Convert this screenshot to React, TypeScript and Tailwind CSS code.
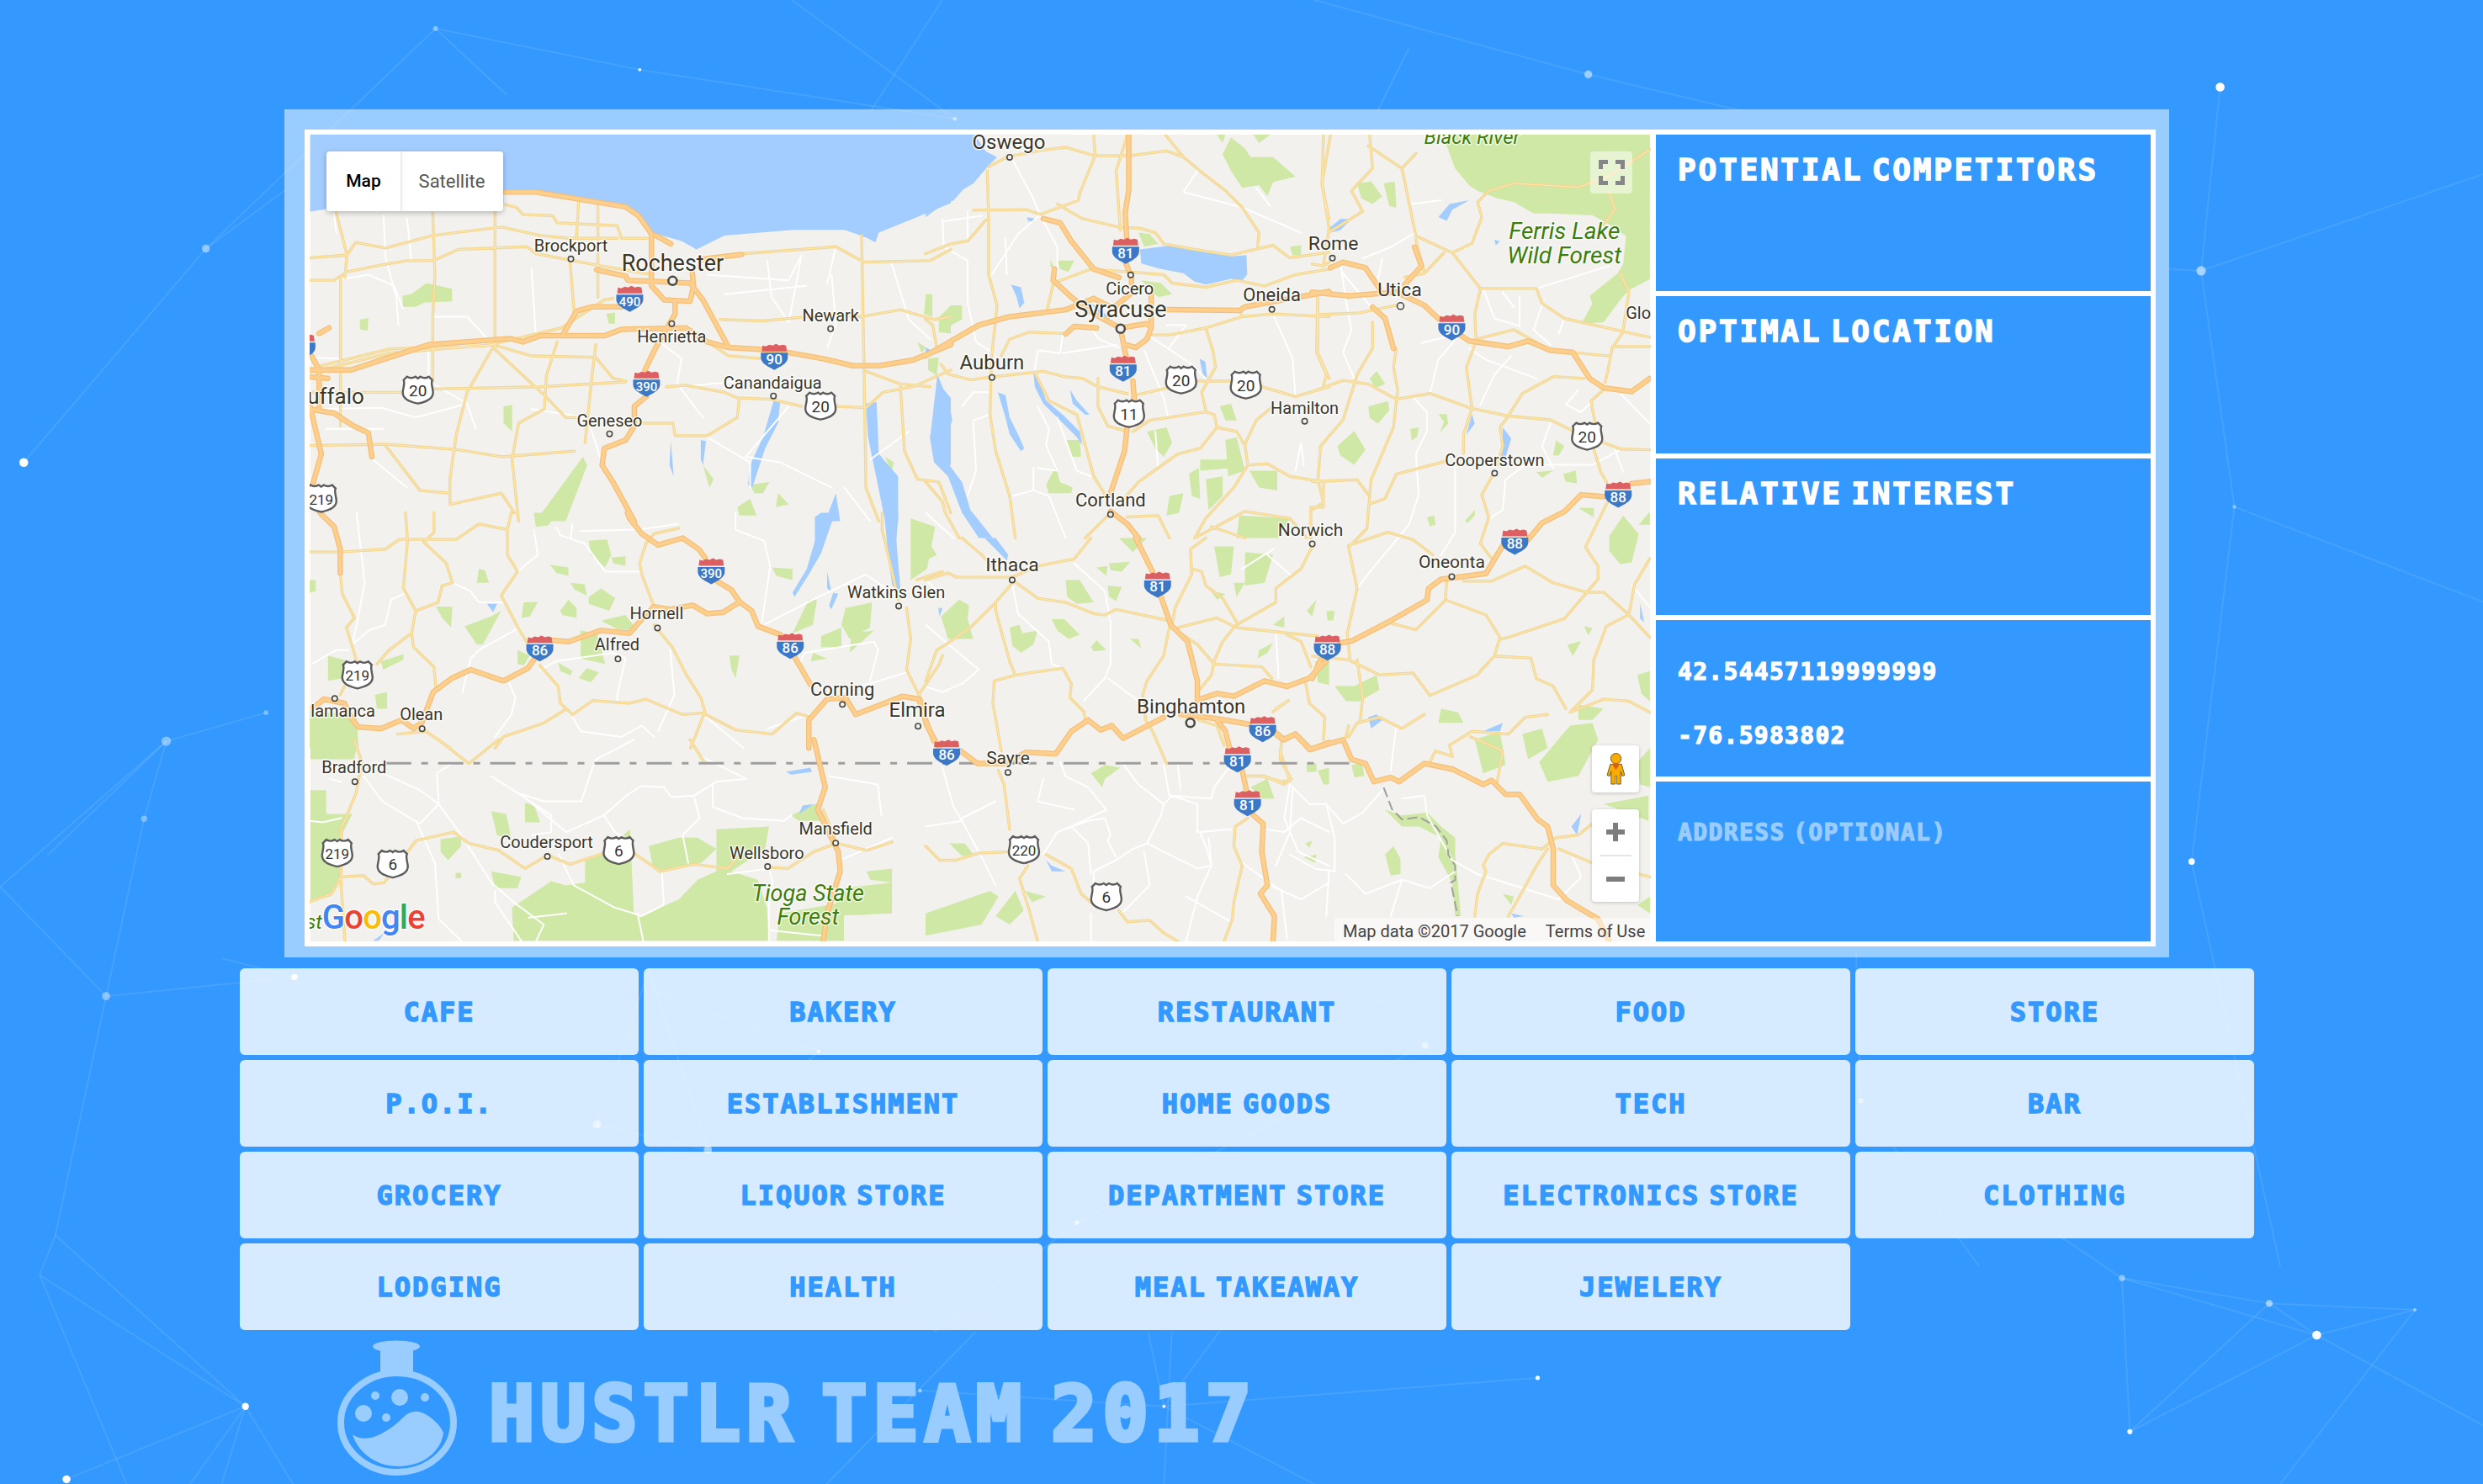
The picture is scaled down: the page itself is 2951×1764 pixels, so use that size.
import React from 'react';

const BLOCK = "font-['DejaVu_Sans_Mono',monospace] font-bold leading-none";

const CATEGORIES = [
  'CAFE', 'BAKERY', 'RESTAURANT', 'FOOD', 'STORE',
  'P.O.I.', 'ESTABLISHMENT', 'HOME GOODS', 'TECH', 'BAR',
  'GROCERY', 'LIQUOR STORE', 'DEPARTMENT STORE', 'ELECTRONICS STORE', 'CLOTHING',
  'LODGING', 'HEALTH', 'MEAL TAKEAWAY', 'JEWELERY',
];

// Map geometry is traced per region: x, y is the region's corner on the page, sx / sy its trace scale
interface Zone {
  x: number;
  y: number;
  sx: number;
  sy: number;
  parks: string;
  water: string;
  white: string;
  minor: string;
  major: string;
}

const ZONES: Zone[] = [
  {
    x: 330, y: 120, sx: 1.96, sy: 3,
    parks: 'M310 690L345 650L405 670L405 715L340 720L320 735L290 735L290 695ZM190 780L210 775L208 820L190 815ZM765 760L785 755L785 795L770 795ZM525 1090L545 1085L545 1180L525 1150ZM990 1300L1015 1350L1005 1380ZM1100 1370L1145 1360L1130 1400L1110 1400ZM1070 1450L1100 1420L1115 1480L1075 1480ZM1165 1400L1190 1440L1160 1450ZM600 1500L710 1270L720 1300L670 1500ZM1415 1270L1435 1290L1430 1330ZM1515 920L1540 915L1535 980L1515 960ZM1490 860L1510 880L1500 900ZM1510 700L1525 690L1525 770L1505 760ZM1540 770L1568 765L1568 830L1540 825Z',
    water: 'M74 120L1568 120L1568 365L1480 420L1400 470L1392 505L1375 490L1320 460L1200 460L1040 480L975 530L940 500L870 470L840 400L820 378L700 345L590 322L525 330L525 370L115 385L74 395ZM1155 1070L1170 1075L1165 1150L1135 1240L1105 1380L1095 1370L1100 1300L1130 1200ZM1370 1080L1395 1075L1400 1260L1445 1340L1445 1500L1415 1500L1395 1350L1375 1200ZM1535 1000L1568 1060L1568 1300L1535 1290L1520 1200ZM915 1215L922 1340L912 1300ZM985 1210L997 1215L990 1300L985 1280ZM1300 1400L1310 1500L1275 1500Z',
    white: 'M130 400L135 470M245 410L250 560L275 700L280 800M130 640L210 620L270 660L290 740M300 420L310 570M590 600L600 830M680 520L780 490M360 770L440 770L500 870M350 870L350 1000L440 1080L460 1170M145 920L80 915M80 1100L240 1095L320 1130L440 1080M110 1170L245 1170M940 1020L1075 1000M1000 620L1190 640L1220 550L1190 790M1040 690L1230 660M1140 570L1150 700L1190 790M1290 620L1300 800L1280 880M1300 520L1280 650M1430 580L1470 780L1520 850M880 850L940 920L930 1010L990 1130M1190 1090L1090 1270L1170 1290L1290 1380M1000 1200L1100 1290L1100 1380M1320 1380L1380 1500M1470 1180L1380 1280M220 1280L300 1380M590 1100L720 1130L750 1270',
    minor: 'M530 370L555 380L570 405L640 410L650 435L790 445L800 490L860 490M74 640L130 640L160 610L240 585L300 570L360 570L420 530L580 520L600 545L740 585L870 620M74 560L160 550L180 505L250 525L360 480L520 450L610 480L680 490L790 490M145 630L145 1160M135 400L160 550L155 630M360 400L365 620L360 770L360 1000M505 380L505 880M680 575L690 760M700 360L695 490M745 370L745 600M745 620L745 700M74 1040L290 1040M360 1028L610 1020L810 1003M905 1020L950 1015L1040 1040L1070 1060L1150 1065L1220 1090M1300 1090L1370 1095L1410 1040L1480 1020L1568 960M100 960L260 900L500 870L590 910L740 915L780 990L810 1000M100 945L260 885L350 880L480 875L660 810L760 710L780 705M500 880L620 1050L670 1130L700 1130M500 880L440 1040L415 1190L400 1350L400 1440L520 1400L550 1470M650 860L625 980L620 1100L560 1150L545 1280L560 1500M740 870L730 1000L715 1220M850 1150L920 1150L925 1195L1000 1195L1070 1130L1075 1060M74 1230L250 1225L420 1245L520 1270L690 1250M250 1230L330 1390L400 1400M1000 860L1050 910L1130 920M1030 780L1130 785L1300 760L1360 770L1450 745L1530 780L1568 770M1040 550L1300 520L1365 575L1520 570L1568 530M1360 480L1365 900L1370 1380L1400 1500M1370 965L1450 1010L1460 1250L1490 1350L1540 1360L1568 1470M1450 1010L1520 1020',
    major: 'M74 960L170 960L280 905L350 870L540 848L570 860L610 838L760 838L800 815L950 810L1000 860L1050 880L1160 890L1270 920L1340 945L1400 945L1480 925L1568 870M742 603L810 625L815 640L960 650L970 670L990 710L1050 880M870 480L870 660L900 710L960 715L968 660L965 610M880 480L915 510M530 325L600 325L660 340L700 350L810 378L840 410L870 475M985 565L1080 548M665 830L695 750L730 735L800 735M855 960L880 880L925 760L925 715M858 1055L830 1090L830 1160L810 1210L760 1240L755 1300L780 1360L830 1500M74 1100L130 1115L175 1160L210 1185L218 1270M74 1090L100 1260L80 1370M74 985L115 990M118 810L95 830M74 900L95 960L95 1100',
  },
  {
    x: 360, y: 610, sx: 2.063, sy: 3,
    parks: 'M700 100L745 95L755 150L740 195L705 150ZM755 160L790 155L790 190L760 180ZM605 185L650 195L650 225L620 215ZM430 200L445 205L455 250L425 250ZM655 250L690 255L695 295L665 275ZM700 300L730 270L765 305L750 350L700 325ZM630 350L650 310L670 340L670 375L635 365ZM540 320L575 318L555 370L535 375ZM395 405L460 370L485 350L440 470L425 470ZM325 335L365 335L362 410L340 375ZM730 385L790 365L820 420L770 415ZM680 420L720 430L740 540L680 520ZM525 490L555 510L540 545L525 540ZM625 535L660 565L655 580L630 565ZM675 590L695 555L725 570L705 605ZM190 530L245 505L245 525L195 560ZM60 510L110 530L100 590L60 600ZM175 650L205 640L205 700L180 700ZM15 710L130 720L135 840L15 840ZM1150 195L1200 200L1200 240L1160 225ZM1045 510L1070 510L1060 590L1050 560ZM1240 310L1260 310L1250 400L1200 430ZM1330 340L1395 320L1390 410L1340 450L1320 400ZM1270 440L1320 410L1320 480L1270 480ZM1345 430L1400 420L1340 500ZM1250 500L1285 520L1245 530ZM1490 20L1550 50L1530 200L1490 240ZM565 0L625 0L600 45L570 50ZM15 240L30 240L30 280L15 285Z',
    water: 'M1255 15L1270 0L1305 0L1290 60L1270 145L1240 220L1205 300L1200 285L1235 200L1245 150L1255 100ZM1425 0L1460 0L1455 100L1465 280L1445 260L1435 160ZM1285 210L1295 280L1285 270ZM1300 285L1312 290L1295 345L1290 330ZM450 325L475 325L465 355Z',
    white: 'M130 0L150 250L130 400L120 470M565 60L575 150L525 210M620 50L630 80L690 110L740 210L825 210M660 40L655 90M680 65L820 60L920 40M1060 0L1060 60L1130 100L1145 190L1125 390M365 250L410 280L430 320L495 320M245 290L215 310L200 400L160 420L120 470M530 410L430 490L410 520L390 640M20 540L80 490L110 490M580 560L620 530L760 500L790 520L770 650L770 670M505 610L520 660L510 720L470 800M900 490L910 650L870 780M1220 530L1230 500L1400 460L1410 490L1390 600M1130 400L1250 310L1380 220L1450 290M980 720L1080 840M660 730L680 780L780 800L830 760L860 800M1480 570L1320 640M1140 770L1240 720',
    minor: 'M15 140L90 140L200 130L235 95L375 95L430 40L500 60L510 0M250 0L255 100L245 270L275 350L265 430L210 490L180 540M295 105L350 180L365 250L340 260L330 320L275 350M320 0L320 70L295 105M500 60L500 150L525 210L485 295L530 420L560 490M90 215L95 290L125 375L105 410L120 480L130 530M265 430L270 480L320 550L325 630M100 620L90 650M580 545L625 620L630 680L660 720L710 670L800 680L840 665L880 690L930 720L980 715L1060 775L1150 790L1210 715L1245 730M640 705L590 750L490 800L470 840M860 335L830 220L825 180L840 110M840 110L860 75L920 55M860 400L905 480L940 580L975 660L985 710L950 840M1480 340L1490 450L1480 560L1510 650L1560 540L1568 510M1420 0L1420 60L1460 310M1510 650L1530 700M230 790L300 780L360 840M1505 240L1568 210',
    major: 'M40 0L75 50L90 130L90 215M120 740L135 765L190 770L240 740L270 770L290 750L318 640L365 590L410 560L490 600L550 555L580 495M610 455L650 460L730 420L800 430L830 380L860 335L900 345L955 330L990 360L1030 355L1070 318M1070 318L1050 275L1010 240M985 160L970 130L930 90L870 115L830 75L800 20L795 0M1070 318L1100 350L1115 405L1170 435M1205 515L1245 615M1240 840L1240 740L1285 665L1330 660L1355 720L1470 655L1510 665L1530 760L1560 840M20 700L50 665L100 680L120 740',
  },
  {
    x: 360, y: 880, sx: 2.24, sy: 3,
    parks: 'M18 0L145 0L135 70L18 70ZM18 180L60 180L60 265L130 265L105 330L100 500L70 560L18 575ZM500 255L540 265L555 360L515 340ZM590 225L615 235L630 295L590 295ZM365 355L420 345L420 380L385 430L365 400ZM405 475L420 475L420 495L405 495ZM500 470L580 490L570 530L510 530ZM555 600L660 505L700 520L750 510L750 430L800 400L870 320L880 620L905 630L950 600L1000 570L1050 500L1100 470L1100 320L1240 310L1230 390L1140 470L1210 500L1235 600L1240 718L560 718ZM920 380L1000 350L1050 350L1100 390L1060 440L960 470L930 450ZM1440 530L1568 510L1568 620L1400 630ZM1300 270L1370 225L1395 290L1320 290ZM1500 470L1568 460L1568 510L1510 500ZM1270 620L1440 580L1440 718L1260 718Z',
    water: 'M1285 115L1350 100L1355 115L1300 125ZM1330 235L1360 230L1320 265ZM185 718L215 690L200 718Z',
    white: 'M160 130L210 220L260 260L310 300L360 230L420 340L500 510L560 580L640 660L620 718M100 280L50 295L18 290M70 140L100 150M300 290L350 440L360 640L420 718M390 90L355 120L360 230L310 180L210 120M500 130L570 190L660 270L660 330L610 340M570 190L640 220L740 220L770 100L780 70L880 0M610 230L700 330L800 270L860 200L900 165L960 170L980 205L1040 200L1100 150L1180 140L1060 60M800 270L830 330L870 360M680 410L720 520L830 600L880 620L900 630L960 590L955 470M890 620L905 718M1040 200L1055 280L1010 340L1025 440M1090 160L1090 240L1170 280L1280 290L1300 270M1130 480L1240 460L1250 510L1240 580L1240 718M1400 130L1530 160L1540 270M600 635L700 620M510 540L510 580L580 718M1240 680L1380 700M1430 430L1568 350',
    minor: 'M135 0L155 80L140 190L100 320L100 520L110 718M18 578L75 550L100 490L160 485L185 515L215 510L300 360L400 330L440 370L520 395L590 460L650 412L710 445L800 405M880 405L950 470L1040 445L1130 460L1150 430M1240 455L1290 460L1360 400L1420 370L1500 395L1568 365M360 0L440 85L520 0M1030 0L1070 85M1420 370L1385 250',
    major: 'M1360 0L1390 170L1370 250L1425 400L1430 470L1395 620L1385 718',
  },
  {
    x: 1100, y: 160, sx: 3, sy: 3,
    parks: 'M1090 10L1140 50L1160 80L1240 80L1320 150L1240 170L1220 220L1190 180L1130 190L1090 130L1060 70ZM1040 0L1070 0L1060 30ZM1170 0L1230 0L1190 30ZM760 350L800 355L830 390L780 400ZM470 450L530 450L510 490L480 480ZM445 445L460 480L445 470ZM40 660L90 610L130 610L130 660L90 680ZM1300 400L1340 395L1340 430L1310 430ZM1050 970L1090 960L1110 1020L1070 1020ZM790 1060L860 1045L880 1100L850 1150L820 1120ZM500 1090L550 1090L555 1150L520 1150ZM430 1250L465 1185L480 1240L525 1260L520 1280L440 1280ZM940 1210L975 1190L980 1300L950 1290ZM870 1290L920 1280L905 1350L860 1360ZM1000 1230L1060 1220L1060 1290L1010 1340ZM1155 1200L1255 1200L1255 1270L1190 1260ZM1070 1090L1110 1080L1140 1200L1080 1220ZM980 1160L1100 1160L1090 1190L980 1200ZM1120 1360L1300 1370L1260 1440L1110 1440ZM770 520L840 530L880 570L830 580ZM0 570L20 570L20 640L0 640Z',
    water: 'M0 0L175 0L215 60L255 80L225 110L170 175L135 195L100 235L60 250L0 295ZM40 850L60 900L85 960L95 1020L70 1090L85 1180L130 1240L160 1340L240 1440L190 1440L130 1350L80 1220L30 1170L15 1080L40 1000ZM258 920L285 930L300 1010L330 1070L352 1120L340 1130L300 1070L285 1010ZM385 850L410 890L430 950L490 1000L550 1060L560 1110L540 1080L480 1020L420 960L390 900ZM515 910L540 950L585 1000L570 1000L525 960ZM765 410L880 395L1000 420L1090 435L1145 430L1148 500L1130 520L1090 515L1000 535L960 525L920 495L840 480L770 460ZM590 600L640 640L660 660L620 640ZM305 535L340 545L352 600L335 620L325 580ZM362 295L395 300L385 312L365 308ZM0 760L20 770L0 780ZM978 800L998 810L1005 870L990 860Z',
    white: 'M60 300L65 400L150 450L150 600L180 740L240 780M150 275L150 380M285 370L290 500M230 510L330 355L410 285M410 290L380 220L310 90M410 290L470 400L470 490M490 710L480 780L400 770L390 840M490 780L680 750M580 680L620 730L690 760M800 720L950 820L1000 870M780 770L850 940L865 1005M60 310L200 290M920 205L970 130M920 205L1130 260L1270 320L1340 350M1180 190L1230 255M1240 640L1310 800L1320 935M130 970L170 920L230 920M170 1020L180 1200L150 1290M230 1000L170 1020M385 1190L385 1270L310 1290M400 970L440 1050L430 1110L470 1200L400 1190M385 1270L440 1290L500 1440M470 1010L540 1200L590 1220M820 1060L830 1190M860 680L930 680L870 760M0 1350L100 1440M1320 1200L1340 1100L1350 1180',
    minor: 'M225 115L290 80L420 55L500 45L600 75L730 75L860 58L920 80L980 130L1070 200L1130 260L1190 350L1185 400M600 0L605 75L550 210L545 235L410 285L360 268L170 270M720 0L680 130L695 340M855 0L920 80M470 248L560 300L690 330L770 335L820 350L850 390L960 410L1090 430L1240 395L1300 440L1440 420M220 130L225 300L225 500L255 610L235 800L230 1000L250 1130L300 1290L320 1440M0 425L90 390L150 380L215 305M0 660L25 680L40 760M55 820L80 855L160 875L240 865L420 845L500 865L560 870L615 900L720 925M270 790L300 730L370 705L490 710M615 870L615 970L650 1040L720 1060M390 850L440 950L540 1000L600 1220L650 1300M750 930L860 905M970 880L1090 880M1200 900L1320 935L1440 900M740 1060L800 1020L1000 990L1030 1000L1040 1045L1110 1060L1140 1110L1150 1180L1220 1175L1300 1220L1420 1240M1000 690L1025 770L1035 830L985 920L1000 985M1000 690L1130 650L1240 640L1440 650M810 715L870 715L1000 690M1130 650L1120 625M1140 1105L1180 1020L1240 970M1040 1045L980 1120L900 1140L830 1190L760 1240L700 1310M1150 1180L1100 1260L1000 1370L960 1440M880 530L1000 545L1110 520L1210 540L1320 500L1440 480M470 525L590 480L720 490L850 500L880 530M460 515L435 620M1400 560L1400 780L1440 870M1420 0L1415 180L1440 300M1420 1240L1420 1330L1375 1330L1375 1440M1140 1440L1020 1400M720 1365L830 1360L870 1440M0 1240L60 1310L70 1350L120 1440M960 1440L1140 1345L1300 1370L1360 1440M650 1360L570 1440',
    major: 'M725 0L725 200L712 280L718 370M695 690L715 790M740 880L745 950M720 1040L710 1130L660 1280M660 1345L720 1390L760 1440M0 790L190 680L300 650L500 625L600 585M600 585L650 610M860 625L1120 628L1140 615L1440 560M420 300L480 315L520 380L560 430L600 480L690 510M715 460L735 510L735 530M460 480L455 520L520 580L600 640L695 690M500 712L530 685L610 690M695 690L790 675L805 690L790 730L750 760L715 750M805 570L805 690M680 610L730 570',
  },
  {
    x: 1100, y: 640, sx: 3, sy: 3,
    parks: 'M55 280L120 220L155 240L150 290L170 360L80 360ZM300 320L335 310L345 340L400 330L385 380L340 410L310 385ZM450 290L495 290L550 345L510 360L470 330ZM590 390L610 365L645 400L600 405ZM730 360L760 360L770 395ZM500 150L550 150L600 230L540 235L505 210ZM650 170L700 175L680 225L655 210ZM610 105L650 100L645 135ZM655 90L730 85L700 120L660 115ZM1030 30L1100 30L1090 130L1050 140ZM1140 50L1240 60L1210 160L1140 170ZM690 0L790 0L740 50ZM1020 190L1070 200L1040 220ZM1100 160L1140 160L1110 210ZM1190 400L1240 375L1220 410L1185 430ZM1240 310L1280 280L1280 320ZM1360 260L1395 220L1380 280ZM590 840L640 810L695 820L640 860L630 890ZM1160 890L1220 860L1245 930L1200 930ZM1360 805L1395 805L1395 835L1360 835ZM1400 830L1440 820L1440 880L1420 880ZM0 1340L230 1260L260 1280L200 1380L0 1420ZM250 1350L320 1260L350 1330L300 1380ZM355 1260L430 1280L380 1300ZM85 1090L140 1090L170 1130L130 1135ZM1350 1140L1395 1130L1390 1160ZM1355 1090L1380 1080L1370 1105ZM0 0L40 60L0 80ZM1390 440L1440 440L1440 525L1400 515Z',
    water: 'M210 0L250 0L295 60L290 80L260 50ZM45 250L60 250L50 280ZM430 1150L450 1170L500 1190L450 1190Z',
    white: 'M0 310L70 370L190 470L130 520L60 550L0 530M310 170L330 270L440 370L450 450L490 465M530 90L640 190L660 300L660 450L640 500L565 580M650 500L770 590M700 800L760 880L850 950L880 920L970 950L970 1050L1090 1040M850 950L840 990L790 1090L740 1110L680 1150L600 1190L600 1230M850 810L870 920L1020 930M900 810L910 900M1090 810L1030 890L1020 930M480 800L500 850L580 890L645 970L520 1030L470 1050L420 1130M420 860L400 940L530 970M60 820L100 960L130 1010L200 1140L250 1240M130 1010L0 1030M130 1000L250 940M470 1050L580 1010L640 1000L660 1060L650 1080L680 1140M520 1030L580 1090L590 1200M780 1120L800 1240L700 1340M790 1090L970 1180L1020 1170L1010 1070M980 1050L1000 1100L1020 1170L970 1280L930 1440M1210 1040L1280 1050L1340 1000L1440 1050M1300 880L1280 1000L1330 1120L1440 1170M1230 1240L1340 1290L1440 1230M1130 1160L1270 1260L1290 1430M930 1280L1090 1370M590 1340L590 1440M1250 340L1260 500M1130 110L1240 40M1220 60L1300 130M0 150L60 200',
    minor: 'M0 150L80 125L110 140L310 140L400 100L530 75L590 0M310 150L400 215L500 230L600 270L640 275L680 255L870 295M130 0L200 60L250 115M310 160L250 230L160 320L80 375L40 400L0 510M250 230L250 260L300 440L320 490M245 510L320 490L380 480L490 465L520 520L515 570L565 620L570 650M245 510L240 590L270 760M870 320L850 420L790 510L775 560L785 650L810 690L860 805M880 310L890 250L950 130L945 40L1000 0M950 110L985 120L1000 170L1060 215L1110 300M900 320L1040 285L1110 320L1300 340L1400 350M1110 310L1250 230L1250 180L1340 110L1380 30M1100 320L1060 370L1030 440L1020 490L980 540M880 320L970 380L1030 450L1200 460L1235 500M1290 345L1340 370L1375 460M1355 510L1370 590L1425 640L1420 720M300 1040L280 880L260 830M0 1100L50 1150L110 1150L190 1125L290 1120M430 1130L520 1180L555 1270L590 1300M690 1330L720 1370L800 1365L850 1410L900 1440M365 1170L335 1215L370 1330L400 1440M1150 1000L1105 1030L1100 1100L1130 1170L1100 1300L1095 1360L1065 1440M1250 610L1295 580L1240 620M1270 730L1265 790L1305 860L1280 880L1210 850L1150 850M975 650L1040 670L1065 740',
    major: 'M750 0L810 120M840 210L875 310L935 370L970 510L970 580M1040 650L1070 690L1085 750M1130 830L1145 900M1170 990L1205 1020L1200 1120L1220 1240L1195 1270L1245 1350L1240 1440M1440 730L1375 755L1320 700L1280 720L1250 695M1155 665L1040 645L910 630M850 640L705 715L665 670L625 685L580 650L520 690L465 770L360 765M360 765L280 805L185 805L125 760M0 650L30 725M980 575L1040 555L1100 565L1210 510L1290 530L1370 500L1430 440',
  },
  {
    x: 1560, y: 160, sx: 3, sy: 2.24,
    parks: 'M465 0L1205 0L1205 385L1130 415L1100 440L1040 500L960 505L1000 450L990 430L1090 370L1110 345L1120 270L1050 235L1000 215L850 210L790 210L720 180L660 170L590 150L560 135L510 90ZM160 130L210 125L250 165L215 185L175 170ZM255 130L295 125L300 195L275 190ZM205 650L230 630L260 665L225 675ZM200 725L270 710L275 735L235 770L205 755ZM350 785L380 780L375 805L355 815ZM90 830L150 790L190 840L150 880L100 855ZM450 745L480 745L485 770L455 795L470 765ZM870 815L900 830L880 855L860 855ZM800 900L860 895L820 915ZM895 905L940 895L945 930L905 925ZM410 1020L435 1015L440 1040L420 1045ZM545 1030L580 1000L580 1015L555 1035ZM950 995L1005 995L1005 1020ZM1060 1070L1110 1015L1165 1065L1140 1140L1100 1145L1060 1110ZM1165 1040L1205 1005L1205 1040ZM50 1270L80 1270L75 1295L55 1295ZM970 1310L1000 1315L985 1335ZM80 1470L150 1470L230 1440L240 1480L170 1510L120 1510ZM1160 1440L1205 1430L1205 1510L1175 1490ZM910 1360L960 1350L930 1390ZM950 1520L1040 1530L1000 1560L950 1560ZM460 1530L520 1540L540 1568L450 1568Z',
    water: 'M450 220L490 185L560 175L500 200L480 230ZM60 250L100 225L140 225L100 255L70 260ZM680 780L710 810L690 860L670 870L680 830ZM570 745L580 770L550 800ZM1170 1250L1185 1300L1170 1290ZM650 280L670 285L655 295Z',
    white: 'M340 160L350 185L460 175M370 260L280 300L180 330M250 330L230 400M100 340L120 440L140 520L110 580L150 650M110 370L210 460M390 555L530 530L450 600L420 690M560 570L620 600L800 650M710 590L650 640L600 720M610 410L650 490L740 510L740 430M680 420L720 460M800 410L1060 350M820 455L790 520L850 560M880 530L900 490M360 700L410 740L410 790L370 850L380 960L345 1040L200 1170L160 1210M510 880L510 1060L460 1120M680 1000L690 920L760 880L1000 880L1100 840M630 1025L680 1000M850 770L820 830L860 890M1080 840L1110 900M950 680L905 720L960 740L1000 710M1100 690L1205 770M1140 1200L1205 1260',
    minor: 'M65 0L35 130L60 250L40 350M0 345L40 350L60 340M205 0L215 90L140 150L180 205L60 260M200 30L320 90L370 270L500 315L600 410L800 410L820 450L900 490L1110 525L1205 540M320 90L370 50M370 280L400 370L330 380M470 315L400 370M500 315L570 290L605 220L590 180L630 150L720 130L950 140L1060 110L1205 40M1060 150L1080 200L1040 240M600 410L580 480L585 550L550 620L570 730L540 800L540 850M1110 525L1070 570L1055 630L1045 660M1100 370L1130 420L1110 520M560 550L720 520L850 575L1060 590M1070 565L1205 565M750 690L860 645L970 650M750 690L700 750L670 780L680 830L660 880M0 685L110 655L200 665L300 705L420 690L570 730L700 750L850 760L930 790M1035 820L1100 838L1205 840M1005 840L1030 900L1050 925M995 710L1010 770M1040 680L995 710M20 480L170 475L300 455M20 420L15 580L50 640L40 670M300 570L290 620L305 680L290 780L210 920L195 1050L130 1100L160 1210L125 1330L135 1400M215 500L215 570L160 640L110 760L30 830L20 920L40 980L0 1000M0 925L160 920L200 960M205 985L260 970L300 905L480 870M130 1095L270 1060L360 1080L430 1120M650 900L605 960L630 1020L600 1090L640 1130M480 1190L475 1240L620 1280L670 1340L650 1390L600 1430L590 1440L420 1495L360 1435L240 1440L130 1400L0 1390M270 1300L370 1320L470 1245M540 1190L640 1190L760 1150L860 1195L980 1220L1020 1185L1020 1150L975 1100L1060 970M980 1220L900 1290L700 1340L670 1345M980 1220L1040 1220L1130 1280L1205 1340M1130 1280L1050 1310L1005 1400L1000 1480L920 1540M650 1390L780 1395L800 1450L860 1470L905 1530M1130 1280L1150 1200L1205 1130M920 1540L1040 1505L1130 1510L1205 1540M160 1400L180 1500L170 1568',
    major: 'M0 420L130 430L300 420L400 455L450 490M530 535L560 550L700 565L770 550L850 575L930 580L990 650L1040 675L1140 685L1205 650M365 300L390 350L330 400M215 460L260 490L290 570M65 355L110 340L190 355L240 410M100 1355L140 1350L270 1300L410 1240L415 1210L460 1185L620 1170L680 1095M770 1080L820 1035L900 1005L960 960L1040 965M1140 930L1205 925M0 1450L30 1400',
  },
  {
    x: 1500, y: 850, sx: 3, sy: 3,
    parks: 'M760 90L850 60L870 180L790 210ZM930 70L1000 50L1020 120L950 160ZM990 170L1100 40L1180 30L1200 90L1130 220L1020 240ZM1220 320L1380 290L1380 380L1250 330ZM1340 170L1386 120L1386 260L1350 250ZM440 500L470 470L495 515L495 570L460 575ZM440 340L500 360L590 350L640 400L690 440L690 500L700 600L710 720L690 720L680 600L630 510L640 440L560 400L500 400ZM860 640L900 650L890 680ZM1340 680L1386 650L1386 710ZM320 180L360 175L365 220L330 225Z',
    water: 'M380 10L410 0L430 20L390 50ZM790 60L860 30L850 60ZM1105 400L1140 355L1125 430ZM890 710L935 720L900 725Z',
    white: 'M460 200L480 40M500 300L580 290L590 360L680 520L770 570M100 250L170 320L230 320L290 390L360 350L430 270M230 320L260 440L260 560L190 550L100 500M110 260L100 420L50 540M300 570L370 640L500 590L600 620L690 560M500 590L460 720M240 560L230 720M770 570L1060 660L1140 580L1110 510',
    minor: 'M0 220L70 240L100 235L65 130M310 80L340 30L420 10L500 50L580 0M300 80L310 40M600 170L620 130L680 150L670 110L750 60L880 70L940 10L1020 0M745 80L860 130L840 240M770 640L760 720M770 640L800 560L790 540L810 500L860 460L1000 480L1050 440L1130 430L1180 390M1060 480L1180 530L1386 580M1020 480L980 540L920 650L880 720',
    major: 'M50 70L75 90L120 70L170 125L290 90L320 160L370 175L400 240L460 225L490 240L580 175L680 195L790 250L820 235L870 285L920 285L985 375L1020 400L1040 480L1040 610L1090 665L1200 730L1240 810',
  },
];

const joined = (key: 'parks' | 'water' | 'white' | 'minor' | 'major', stroke: string, width: number, filled = false) =>
  ZONES.map((z) => (
    <path
      key={z.x + '-' + z.y + key + width}
      d={z[key]}
      transform={`translate(${z.x} ${z.y}) scale(${1 / z.sx} ${1 / z.sy})`}
      fill={filled ? stroke : 'none'}
      stroke={filled ? 'none' : stroke}
      strokeWidth={filled ? 0 : width}
      strokeLinejoin="round"
      strokeLinecap="round"
      vectorEffect="non-scaling-stroke"
    />
  ));

const INTERSTATES: [string, number, number][] = [
  ['490', 748, 355], ['90', 920, 424], ['390', 768, 456], ['81', 1338, 298], ['81', 1335, 438],
  ['390', 845, 679], ['86', 641, 771], ['86', 939, 768], ['86', 1125, 895], ['81', 1376, 695],
  ['86', 1501, 867], ['81', 1471, 903], ['81', 1483, 955], ['88', 1801, 644], ['88', 1578, 770],
  ['88', 1924, 588], ['90', 1726, 389], ['90', 358, 412],
];

const HIGHWAYS: [string, number, number][] = [
  ['20', 1404, 452], ['20', 1481, 458], ['11', 1342, 492], ['20', 496, 464], ['20', 975, 483],
  ['20', 1887, 519], ['219', 381, 593], ['219', 424, 803], ['219', 400, 1015], ['6', 466, 1028],
  ['6', 735, 1012], ['220', 1217, 1011], ['6', 1315, 1067],
];

const DOTS: [number, number, number][] = [
  [799, 334, 5], [1332, 391, 5], [1415, 860, 5], [1665, 364, 4], [678, 308, 3.2], [798, 385, 3.2],
  [987, 391, 3.2], [919, 471, 3.2], [724, 516, 3.2], [1200, 187, 3.2], [1344, 327, 3.2], [1512, 368, 3.2],
  [1179, 449, 3.2], [1320, 612, 3.2], [1551, 501, 3.2], [1584, 307, 3.2], [1777, 563, 3.2], [1560, 647, 3.2],
  [1726, 686, 3.2], [1203, 690, 3.2], [1068, 721, 3.2], [781, 747, 3.2], [734, 784, 3.2], [1001, 838, 3.2],
  [1091, 864, 3.2], [1198, 919, 3.2], [501, 867, 3.2], [397, 831, 3.2], [421, 930, 3.2], [650, 1019, 3.2],
  [912, 1031, 3.2], [993, 1003, 3.2],
];

const CITIES: [string, number, number, number, ('start' | 'middle' | 'end')?][] = [
  ['Rochester', 799, 322, 27], ['Brockport', 678, 299, 20], ['Henrietta', 798, 407, 20], ['Newark', 987, 382, 20],
  ['Canandaigua', 918, 462, 20], ['Geneseo', 724, 507, 20], ['Buffalo', 432, 480, 26, 'end'], ['Oswego', 1199, 177, 24],
  ['Syracuse', 1332, 377, 27], ['Cicero', 1343, 350, 20], ['Oneida', 1512, 358, 22], ['Auburn', 1179, 439, 24],
  ['Cortland', 1320, 602, 22], ['Hamilton', 1551, 492, 20], ['Rome', 1585, 297, 23], ['Utica', 1664, 352, 23],
  ['Gloversville', 1933, 379, 20, 'start'], ['Cooperstown', 1777, 554, 20], ['Norwich', 1558, 638, 21],
  ['Oneonta', 1726, 676, 21], ['Ithaca', 1203, 680, 23], ['Watkins Glen', 1065, 712, 20], ['Hornell', 780, 737, 20],
  ['Alfred', 733, 774, 20], ['Corning', 1001, 828, 22], ['Elmira', 1090, 853, 24], ['Binghamton', 1416, 849, 24],
  ['Sayre', 1198, 909, 21], ['Salamanca', 445, 853, 20, 'end'], ['Olean', 500, 857, 20], ['Bradford', 420, 920, 20],
  ['Coudersport', 649, 1009, 20], ['Wellsboro', 911, 1022, 20], ['Mansfield', 993, 993, 20],
];

const FORESTS: [string, number, number, number, ('middle' | 'end')?][] = [
  ['Tioga State', 960, 1072, 27], ['Forest', 960, 1100, 27], ['Ferris Lake', 1860, 284, 28], ['Wild Forest', 1860, 313, 28],
  ['Black River', 1750, 171, 24], ['Forest', 382, 1105, 24, 'end'],
];

const GOOGLE: [string, string][] = [['G', '#4285f4'], ['o', '#ea4335'], ['o', '#fbbc05'], ['g', '#4285f4'], ['l', '#34a853'], ['e', '#ea4335']];

const RoadMap = () => (
  <svg viewBox="368 160 1594 960" className="block h-full w-full">
    <rect x="368" y="160" width="1594" height="960" fill="#f2f1ee" />
    {joined('parks', '#cfe8a5', 0, true)}
    {joined('water', '#a3ccff', 0, true)}
    {joined('white', '#ffffff', 2)}
    {joined('minor', '#f3d792', 3.4)}
    {joined('minor', '#fbe9b8', 1)}
    <path d="M458 908H1620" stroke="#9e9e9e" strokeWidth="3" strokeDasharray="30 12 8 12" fill="none" />
    {joined('major', '#f5bf76', 6.5)}
    {joined('major', '#fdcf8e', 4)}
    {DOTS.map(([x, y, r]) => (
      <circle key={x + '-' + y} cx={x} cy={y} r={r} fill="#f2f1ee" stroke="#4a4a44" strokeWidth={r > 4 ? 2.5 : 1.6} />
    ))}
    {HIGHWAYS.map(([n, x, y]) => (
      <g key={n + x} transform={`translate(${x} ${y})`}>
        <path d="M-13-16Q-8-13-3-16L0-14 3-16Q8-13 13-16L17-12C15-8 18-2 18 3 18 10 10 14 0 16-10 14-18 10-18 3-18-2-15-8-17-12Z" fill="#fff" stroke="#5c5c5c" strokeWidth="2.4" />
        <text y="7" textAnchor="middle" fontFamily="Roboto, sans-serif" fontSize={n.length > 2 ? 17 : 19} fill="#333">{n}</text>
      </g>
    ))}
    {INTERSTATES.map(([n, x, y]) => (
      <g key={n + x} transform={`translate(${x} ${y})`}>
        <path d="M-15-6L-14-13-10-12-6-14-2-13 2-15 6-13 10-14 14-13 15-6Z" fill="#dc5f61" />
        <path d="M-16-4.5H16V2C15 9 7 12 0 16-7 12-15 9-16 2Z" fill="#3c78c8" />
        <text y="9" textAnchor="middle" fontFamily="Roboto, sans-serif" fontWeight="500" fontSize={n.length > 2 ? 15 : 17} fill="#fff">{n}</text>
      </g>
    ))}
    <g fontFamily="Roboto, sans-serif" fill="#39362c" stroke="#fff" strokeOpacity="0.8" strokeWidth="3" paintOrder="stroke" strokeLinejoin="round">
      {CITIES.map(([t, x, y, s, a]) => (
        <text key={t} x={x} y={y} fontSize={s} textAnchor={a ?? 'middle'}>{t}</text>
      ))}
    </g>
    <g fontFamily="Roboto, sans-serif" fontStyle="italic" fill="#3d7d0c" stroke="#fff" strokeOpacity="0.7" strokeWidth="3" paintOrder="stroke" strokeLinejoin="round">
      {FORESTS.map(([t, x, y, s, a]) => (
        <text key={t + x} x={x} y={y} fontSize={s} textAnchor={a ?? 'middle'}>{t}</text>
      ))}
    </g>
    <text x="382" y="1105" fontFamily="Roboto, sans-serif" fontWeight="500" fontSize="40" stroke="#fff" strokeOpacity="0.8" strokeWidth="3" paintOrder="stroke" textLength="123">
      {GOOGLE.map(([c, f], i) => (
        <tspan key={i} fill={f}>{c}</tspan>
      ))}
    </text>
    <path d="M1645 937L1655 963 1667 975 1687 972 1707 983 1720 1000 1722 1017 1730 1030 1730 1047 1725 1050 1733 1090" fill="none" stroke="#a0a0a0" strokeWidth="2" strokeDasharray="12 5" />
  </svg>
);

const PARTICLE_LINES = [
  [130, 157, 275, 18], [130, 157, 15, 292], [130, 157, 180, 120], [275, 18, 404, 44], [404, 44, 603, 75], [275, 18, 320, 60],
  [550, 70, 595, 0], [603, 75, 500, 0], [830, 0, 1003, 47], [890, 30, 870, 70], [1003, 47, 1100, 70], [1402, 55, 1390, 171],
  [1390, 171, 1411, 320], [1411, 320, 1384, 544], [1370, 170, 1390, 171], [1390, 171, 1568, 110], [1411, 320, 1568, 380],
  [1384, 544, 1440, 800], [1340, 807, 1433, 823], [1433, 823, 1525, 827], [1525, 827, 1463, 843], [1463, 843, 1345, 904],
  [1345, 904, 1340, 807], [1433, 823, 1463, 843], [1340, 807, 1463, 843], [1433, 823, 1345, 904], [1525, 827, 1440, 937],
  [1463, 843, 1568, 900], [1300, 780, 1340, 807], [105, 468, 168, 450], [105, 468, 91, 517], [91, 517, 67, 629], [67, 629, 35, 780],
  [35, 780, 25, 805], [25, 805, 80, 937], [25, 805, 155, 888], [35, 780, 155, 888], [155, 888, 42, 934], [155, 888, 120, 937],
  [155, 888, 185, 937], [155, 888, 140, 937], [0, 560, 67, 629], [67, 629, 186, 617], [186, 617, 140, 605], [105, 468, 0, 560],
  [105, 468, 30, 540], [517, 664, 447, 726], [447, 726, 377, 710], [377, 710, 410, 612], [517, 664, 410, 625], [447, 726, 410, 612],
  [616, 841, 522, 937], [740, 841, 735, 937], [770, 841, 735, 888], [735, 888, 725, 841], [581, 878, 735, 888], [735, 888, 830, 937],
  [971, 870, 735, 888], [900, 660, 850, 612], [900, 660, 680, 772], [1175, 695, 1250, 800], [1172, 600, 1175, 695], [680, 772, 590, 841],
];

const PARTICLE_DOTS: [number, number, number, number][] = [
  [15, 292, 2.8, 1], [130, 157, 2.5, 0.45], [404, 44, 1, 0.9], [275, 18, 1.5, 0.4], [603, 75, 1.2, 0.5], [1003, 47, 2.5, 0.5],
  [1402, 55, 2.8, 1], [1390, 171, 3, 0.55], [1411, 320, 1.2, 0.4], [1384, 544, 2, 1], [1463, 843, 2.8, 1], [1433, 823, 2.2, 0.5],
  [1340, 807, 2, 0.4], [1345, 904, 1.6, 1], [1525, 827, 1, 0.5], [971, 870, 1.4, 1], [155, 888, 2.2, 1], [42, 934, 2.5, 1],
  [105, 468, 3, 0.4], [67, 629, 2.6, 0.4], [91, 517, 2, 0.35], [168, 450, 1.5, 0.35], [186, 617, 2, 0.9], [377, 710, 2.6, 0.5],
  [447, 726, 2.6, 0.5], [517, 664, 1.2, 0.7], [900, 660, 2, 0.5], [680, 772, 1.5, 0.6], [1175, 695, 1.5, 0.5], [581, 878, 1.2, 0.5], [735, 888, 1, 0.9],
];

const Particles = () => (
  <svg viewBox="0 0 1568 937" preserveAspectRatio="none" className="absolute inset-0 h-full w-full">
    {PARTICLE_LINES.map(([a, b, c, d], i) => (
      <line key={i} x1={a} y1={b} x2={c} y2={d} stroke="#fff" strokeOpacity="0.1" strokeWidth="1" />
    ))}
    {PARTICLE_DOTS.map(([x, y, r, o], i) => (
      <circle key={i} cx={x} cy={y} r={r} fill="#fff" fillOpacity={o} />
    ))}
  </svg>
);

const Flask = () => (
  <svg viewBox="0 0 142 161" className="h-[161px] w-[142px] shrink-0" fill="#99ccff">
    <ellipse cx="70" cy="7.5" rx="28" ry="7" />
    <rect x="51" y="10" width="39" height="28" />
    <ellipse cx="71" cy="98" rx="67" ry="59" fill="none" stroke="#99ccff" strokeWidth="8" />
    <path d="M18 112C26 118 36 118 46 114 60 108 70 100 78 92 84 86 90 84 96 85 108 87 122 100 126 110 124 130 104 150 73 150 44 150 24 132 18 112Z" />
    <ellipse cx="74" cy="68" rx="10" ry="10" />
    <ellipse cx="31" cy="87" rx="10" ry="10" />
    <circle cx="45" cy="66" r="5" />
    <circle cx="104" cy="68" r="5" />
    <circle cx="58" cy="92" r="5" />
  </svg>
);

const Panel = ({ className, children }: { className: string; children: React.ReactNode }) => (
  <div className={`${className} bg-[#3399ff] pl-[26px]`}>{children}</div>
);

const Heading = ({ children }: { children: React.ReactNode }) => (
  <div className={`${BLOCK} pt-6 text-[36px] tracking-[2.8px] text-white [-webkit-text-stroke:1.5px_white] [word-spacing:-14px]`}>{children}</div>
);

export default function App() {
  return (
    <div className="relative h-[1764px] w-[2951px] overflow-hidden bg-[#3399ff]">
      <Particles />
      <div className="relative flex flex-col">
        <div className="ml-[338px] mt-[130px] w-[2240px] bg-white/50 pb-[13px] pl-6 pr-4 pt-6">
          <div className="flex h-[971px] gap-[6px] bg-white p-[6px]">
            <div className="relative w-[1594px] overflow-hidden">
              <RoadMap />
              <div className="absolute left-5 top-5 flex h-[71px] overflow-hidden rounded-[4px] bg-white font-['Roboto',sans-serif] shadow-[0_2px_6px_rgba(0,0,0,0.25)]">
                <div className="flex w-[88px] items-center justify-center text-[21px] font-medium text-black shadow-[1px_0_3px_rgba(0,0,0,0.15)]">Map</div>
                <div className="flex w-[122px] items-center justify-center text-[22px] text-[#565656]">Satellite</div>
              </div>
              <div className="absolute left-[1522px] top-5 flex h-[50px] w-[50px] items-center justify-center rounded-[4px] bg-white/50">
                <svg viewBox="0 0 31 30" className="h-[30px] w-[31px]" fill="none" stroke="#868686" strokeWidth="5">
                  <path d="M2.5 11V2.5H11M20 2.5H28.5V11M28.5 19V27.5H20M11 27.5H2.5V19" />
                </svg>
              </div>
              <div className="absolute left-[1524px] top-[726px] flex h-14 w-14 items-center justify-center rounded-[4px] bg-white shadow-[0_1px_4px_rgba(0,0,0,0.2)]">
                <svg viewBox="0 0 24 40" className="h-[38px] w-[23px]" stroke="#6b5a2c" strokeWidth="1">
                  <circle cx="12" cy="7" r="6.5" fill="#f9ab00" />
                  <path d="M5 14H19L23 28 20 29 18 23V39H13V29H11V39H6V23L4 29 1 28Z" fill="#f9ab00" />
                  <path d="M7 14H17L12 21Z" fill="#d9601a" stroke="none" />
                </svg>
              </div>
              <div className="absolute left-[1524px] top-[802px] flex h-[110px] w-14 flex-col items-center rounded-[4px] bg-white pt-4 shadow-[0_1px_4px_rgba(0,0,0,0.2)]">
                <svg viewBox="0 0 22 22" className="h-[22px] w-[22px]" fill="#7d7d7d">
                  <path d="M8 0H14V8H22V14H14V22H8V14H0V8H8Z" />
                </svg>
                <div className="mt-4 h-[2px] w-[37px] bg-[#e6e6e6]" />
                <div className="mt-6 h-[6px] w-[22px] bg-[#7d7d7d]" />
              </div>
              <div className="absolute bottom-0 right-0 flex h-[28px] w-[376px] items-center gap-[23px] bg-white/50 pl-[10px] pt-1 font-['Roboto',sans-serif] text-[20px] leading-none text-[#444]">
                <span>Map data ©2017 Google</span>
                <span>Terms of Use</span>
              </div>
            </div>
            <div className="flex w-[588px] flex-col gap-[6px]">
              <Panel className="h-[186px]"><Heading>POTENTIAL COMPETITORS</Heading></Panel>
              <Panel className="h-[187px]"><Heading>OPTIMAL LOCATION</Heading></Panel>
              <Panel className="h-[186px]"><Heading>RELATIVE INTEREST</Heading></Panel>
              <Panel className="h-[186px]">
                <div className={`${BLOCK} flex flex-col gap-[48px] pt-[48px] text-[28px] tracking-[1.3px] text-white [-webkit-text-stroke:1.2px_white]`}>
                  <span>42.54457119999999</span>
                  <span>-76.5983802</span>
                </div>
              </Panel>
              <Panel className="flex-1">
                <div className={`${BLOCK} pt-[47px] text-[28px] tracking-[1.4px] text-[#99ccff] [-webkit-text-stroke:1.2px_#99ccff] [word-spacing:-9px]`}>ADDRESS (OPTIONAL)</div>
              </Panel>
            </div>
          </div>
        </div>
        <div className="ml-[285px] mt-[13px] grid w-[2394px] grid-cols-5 gap-[6px]">
          {CATEGORIES.map((c) => (
            <div key={c} className={`${BLOCK} flex h-[103px] items-center justify-center rounded-md bg-white/80 text-[32px] tracking-[2px] text-[#3399ff] [-webkit-text-stroke:1.4px_#3399ff] [word-spacing:-10px]`}>
              {c}
            </div>
          ))}
        </div>
        <div className="ml-[401px] mt-3 flex gap-[38px]">
          <Flask />
          <div className={`${BLOCK} pt-[43px] text-[90px] tracking-[7px] text-[#99ccff] [-webkit-text-stroke:5px_#99ccff] [word-spacing:-33px]`}>HUSTLR TEAM 2017</div>
        </div>
      </div>
    </div>
  );
}
